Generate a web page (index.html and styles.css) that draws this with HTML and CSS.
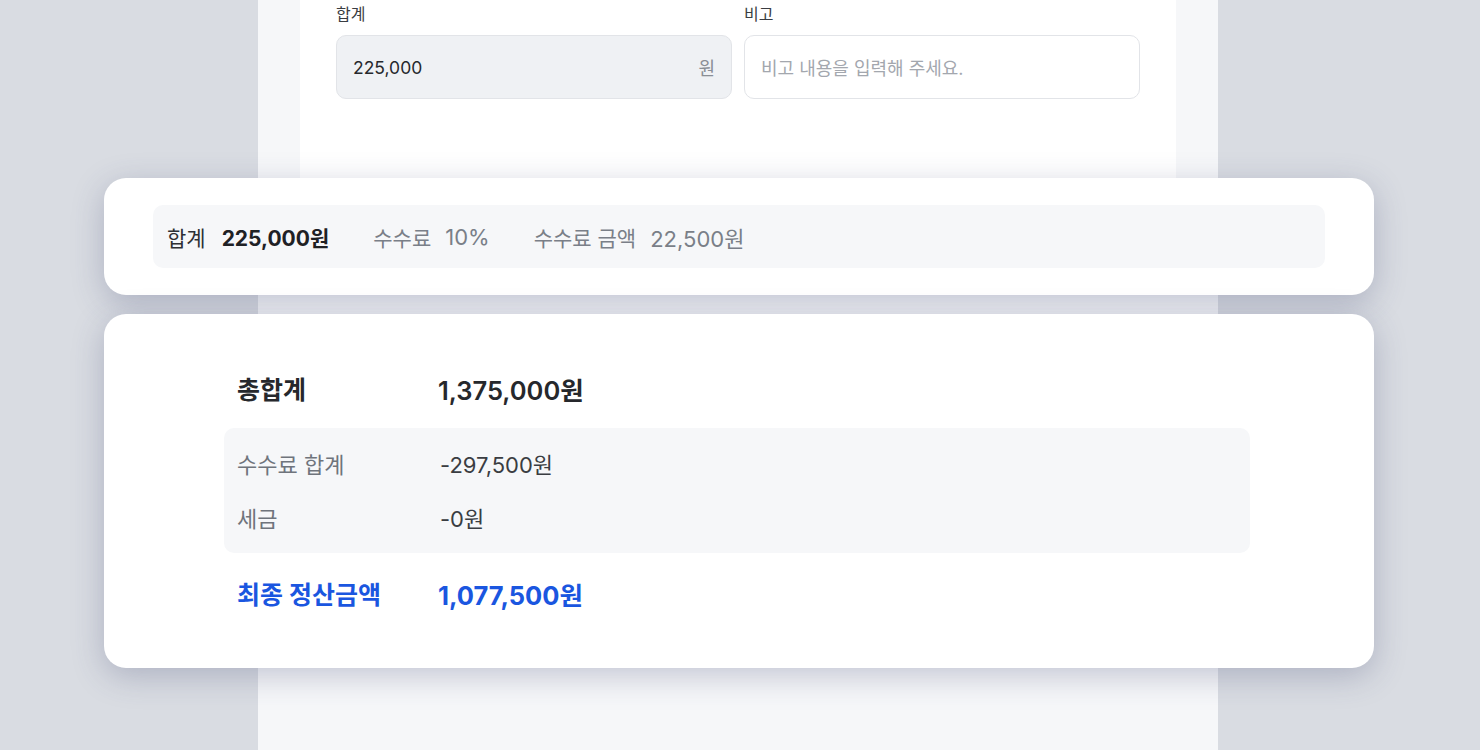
FILE: index.html
```html
<!DOCTYPE html>
<html lang="ko">
<head>
    <meta charset="UTF-8">
    <meta name="viewport" content="width=device-width, initial-scale=1.0">
    <title>정산 요약</title>
    <link rel="stylesheet" href="styles.css">
</head>
<body>
    <div class="stage">
        <!-- 뒤쪽 정산 입력 화면 -->
        <div class="panel">
            <div class="panel-card">
                <div class="field-row">
                    <div class="field">
                        <label class="field-label">합계</label>
                        <div class="input input-readonly">
                            <span>225,000</span>
                            <span class="unit">원</span>
                        </div>
                    </div>
                    <div class="field">
                        <label class="field-label">비고</label>
                        <div class="input">
                            <span class="placeholder">비고 내용을 입력해 주세요.</span>
                        </div>
                    </div>
                </div>
            </div>
        </div>

        <!-- 위에 떠 있는 요약 카드 -->
        <div class="overlay">
            <div class="card card-summary">
                <div class="summary-bar">
                    <div class="summary-item first">
                        <span class="summary-label dark">합계</span>
                        <strong class="summary-value">225,000원</strong>
                    </div>
                    <div class="summary-item">
                        <span class="summary-label">수수료</span>
                        <span class="summary-value light">10%</span>
                    </div>
                    <div class="summary-item">
                        <span class="summary-label">수수료 금액</span>
                        <span class="summary-value light">22,500원</span>
                    </div>
                </div>
            </div>

            <div class="card card-total">
                <div class="total-row">
                    <span class="total-label">총합계</span>
                    <span class="total-value">1,375,000원</span>
                </div>
                <div class="deduct-box">
                    <div class="deduct-row">
                        <span class="deduct-label">수수료 합계</span>
                        <span class="deduct-value">-297,500원</span>
                    </div>
                    <div class="deduct-row">
                        <span class="deduct-label">세금</span>
                        <span class="deduct-value">-0원</span>
                    </div>
                </div>
                <div class="total-row final">
                    <span class="total-label">최종 정산금액</span>
                    <span class="total-value">1,077,500원</span>
                </div>
            </div>
        </div>
    </div>
</body>
</html>
```

FILE: styles.css
```css
body {
    margin: 0;
    height: 750px;
    overflow: hidden;
    background: #d9dce2;
    font-family: Inter, "Noto Sans CJK KR", sans-serif;
    color: #26282c;
}

.stage {
    display: grid;
    height: 750px;
}

/* 뒤쪽 화면 */
.panel {
    grid-area: 1 / 1;
    justify-self: start;
    margin-left: 258px;
    width: 960px;
    background: #f6f7f9;
}
.panel-card {
    margin: 0 42px;
    padding: 4px 36px 90px;
    background: #fff;
}
.field-row {
    display: flex;
    gap: 12px;
}
.field {
    flex: 1;
    display: flex;
    flex-direction: column;
    gap: 11px;
}
.field-label {
    font-size: 16px;
    line-height: 20px;
    color: #3a3d42;
}
.input {
    height: 62px;
    display: flex;
    align-items: center;
    justify-content: space-between;
    padding: 0 16px;
    border: 1px solid #e2e4e8;
    border-radius: 10px;
    background: #fff;
    font-size: 17.5px;
    color: #26282c;
}
.input-readonly {
    background: #eff1f4;
}
.unit {
    color: #8a8e95;
    font-size: 18px;
}
.placeholder {
    color: #a3a7ae;
    font-size: 18px;
}

/* 요약 카드 */
.overlay {
    grid-area: 1 / 1;
    justify-self: start;
    margin-left: 104px;
    width: 1270px;
    padding-top: 178px;
    display: flex;
    flex-direction: column;
    gap: 19px;
}
.card {
    background: #fff;
    border-radius: 22px;
    box-shadow: 0 8px 32px rgba(60, 70, 110, 0.28);
}
.card-summary {
    padding: 27px 49px;
}
.summary-bar {
    height: 63px;
    display: flex;
    align-items: center;
    gap: 44px;
    padding: 0 14px;
    background: #f6f7f9;
    border-radius: 10px;
}
.summary-item {
    display: flex;
    align-items: center;
    gap: 14px;
}
.summary-item.first {
    gap: 16px;
}
.summary-label {
    font-size: 21px;
    color: #7a7f88;
}
.summary-label.dark {
    color: #2e3034;
}
.summary-value {
    font-size: 21px;
    font-weight: 700;
    color: #1f2125;
}
.summary-value.light {
    font-size: 22px;
    font-weight: 400;
    color: #7a7f88;
}

.card-total {
    padding: 48px 124px 49px 120px;
    display: flex;
    flex-direction: column;
}
.total-row {
    height: 52px;
    display: flex;
    align-items: center;
    padding: 0 13px;
}
.total-label {
    width: 201px;
    font-size: 25px;
    font-weight: 700;
    color: #26282c;
}
.total-value {
    font-size: 25.5px;
    font-weight: 600;
    color: #26282c;
}
.deduct-box {
    margin-top: 14px;
    padding: 8px 13px 9px;
    background: #f6f7f9;
    border-radius: 10px;
}
.deduct-row {
    height: 54px;
    display: flex;
    align-items: center;
}
.deduct-label {
    width: 203px;
    font-size: 22px;
    color: #6f747c;
}
.deduct-value {
    font-size: 22px;
    color: #3a3d42;
}
.total-row.final {
    margin-top: 14px;
}
.final .total-label,
.final .total-value {
    color: #1a56e0;
    font-weight: 700;
}
```
